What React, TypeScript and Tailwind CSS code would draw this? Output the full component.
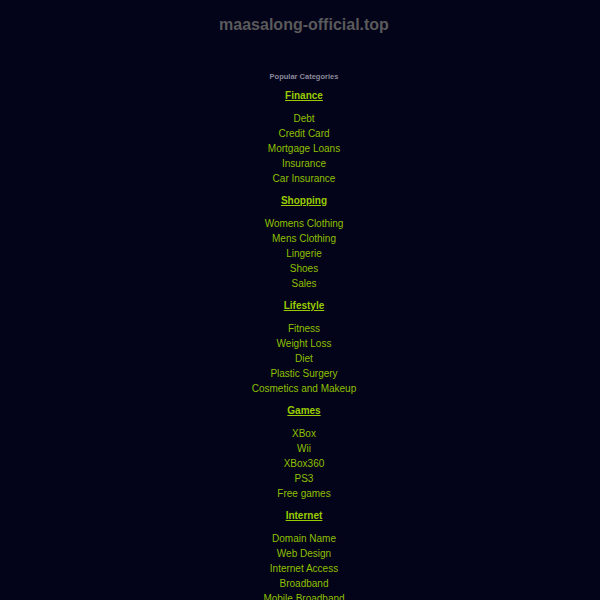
import React from 'react';

const categories = [
  { title: 'Finance', items: ['Debt', 'Credit Card', 'Mortgage Loans', 'Insurance', 'Car Insurance'] },
  { title: 'Shopping', items: ['Womens Clothing', 'Mens Clothing', 'Lingerie', 'Shoes', 'Sales'] },
  { title: 'Lifestyle', items: ['Fitness', 'Weight Loss', 'Diet', 'Plastic Surgery', 'Cosmetics and Makeup'] },
  { title: 'Games', items: ['XBox', 'Wii', 'XBox360', 'PS3', 'Free games'] },
  { title: 'Internet', items: ['Domain Name', 'Web Design', 'Internet Access', 'Broadband', 'Mobile Broadband'] },
];

export default function App() {
  return (
    <div className="min-h-screen bg-[#03031a] pl-[8px] text-center font-['Liberation_Sans',Arial,sans-serif]">
      {/* Domain title */}
      <div className="pt-[16px]">
        <h1 className="text-[16px] leading-[18px] font-bold text-[#5a5a5a]">maasalong-official.top</h1>
      </div>

      {/* Category list */}
      <div className="mt-[38px]">
        <p className="text-[7.5px] leading-[10px] font-bold text-[#8a8a99]">Popular Categories</p>
        <div className="mt-[6px] flex flex-col items-center">
          {categories.map((cat) => (
            <div key={cat.title} className="flex flex-col items-center">
              <a href="#" className="text-[10px] leading-[15px] font-bold text-[#99cc00] underline">
                {cat.title}
              </a>
              <ul className="mt-[8px] mb-[7px] flex flex-col items-center">
                {cat.items.map((item) => (
                  <li key={item} className="text-[10px] leading-[15px]">
                    <a href="#" className="text-[#8fc000]">
                      {item}
                    </a>
                  </li>
                ))}
              </ul>
            </div>
          ))}
        </div>
      </div>
    </div>
  );
}
